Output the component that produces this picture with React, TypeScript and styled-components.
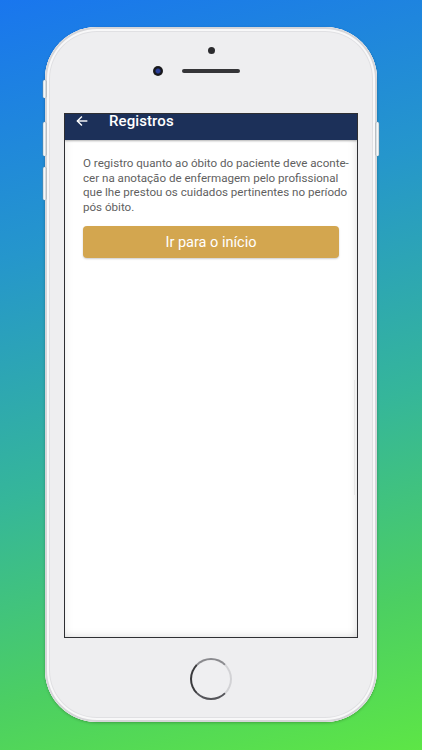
import React from "react";
import styled, { createGlobalStyle } from "styled-components";

const Global = createGlobalStyle`
  html, body { margin: 0; padding: 0; }
  body { font-family: Roboto, "Noto Sans", sans-serif; }
`;

const Page = styled.div`
  width: 422px;
  height: 750px;
  background: linear-gradient(165deg, #1976ee 0%, #2596cc 30%, #35b69a 58%, #4ccf62 82%, #5de646 100%);
  display: flex;
  justify-content: center;
  padding-top: 27px;
  box-sizing: border-box;
  overflow: hidden;
`;

const Phone = styled.div`
  position: relative;
  width: 332px;
  height: 695px;
  box-sizing: border-box;
  border-radius: 52px;
  background: #eeeef0;
  box-shadow:
    inset 0 0 0 2px #d6d6d9,
    inset 0 0 0 4px #f8f8f9,
    inset 0 0 0 5px #e0e0e3,
    0 1px 3px rgba(0, 0, 0, 0.25);
  display: flex;
  flex-direction: column;
  align-items: center;
`;

const SideButton = styled.div<{ $top: number; $h: number; $right?: boolean }>`
  position: absolute;
  top: ${(p) => p.$top}px;
  height: ${(p) => p.$h}px;
  width: 3px;
  ${(p) => (p.$right ? "right: -2px;" : "left: -2px;")}
  background: linear-gradient(90deg, #cfd6da, #f4f8fa, #c8ced2);
  border-radius: 2px;
  box-shadow: 0 0 0 0.5px rgba(120, 140, 150, 0.6);
`;

const TopBezel = styled.div`
  height: 86px;
  width: 100%;
  display: flex;
  flex-direction: column;
  align-items: center;
  padding-top: 20px;
  box-sizing: border-box;
`;

const Dot = styled.div`
  width: 7px;
  height: 7px;
  border-radius: 50%;
  background: #2b2b2e;
`;

const EarRow = styled.div`
  margin-top: 12px;
  display: flex;
  align-items: center;
  gap: 19px;
`;

const Camera = styled.div`
  width: 10px;
  height: 10px;
  border-radius: 50%;
  background: radial-gradient(circle at 50% 50%, #2a3f9a 0 25%, #151518 45%, #2b2b2e 100%);
`;

const Speaker = styled.div`
  width: 58px;
  height: 4px;
  border-radius: 3px;
  background: #353538;
`;

const Spacer = styled.div`
  width: 10px;
`;

const Screen = styled.div`
  width: 294px;
  height: 525px;
  box-sizing: border-box;
  border: 1.5px solid #2e2f33;
  background: #ffffff;
  display: flex;
  flex-direction: column;
  position: relative;
  overflow: hidden;
`;

const Header = styled.div`
  height: 26px;
  background: #1c3059;
  display: flex;
  align-items: flex-start;
  padding: 0 0 0 10px;
  box-shadow: 0 1px 2px rgba(0, 0, 0, 0.3);
  z-index: 1;
`;

const BackIcon = styled.svg`
  width: 14px;
  height: 14px;
  margin-top: 0px;
`;

const Title = styled.span`
  margin-left: 20px;
  margin-top: -2px;
  color: #ffffff;
  font-size: 15px;
  line-height: 18px;
  font-weight: 500;
  letter-spacing: 0.1px;
`;

const Content = styled.div`
  flex: 1;
  padding: 16px 18px 0 18px;
  box-shadow: inset -8px 0 10px -8px rgba(0, 0, 0, 0.15), inset 8px 0 10px -8px rgba(0, 0, 0, 0.08),
    inset 0 -8px 10px -8px rgba(0, 0, 0, 0.15);
  position: relative;
`;

const Paragraph = styled.p`
  margin: 0;
  font-size: 11.6px;
  line-height: 14.6px;
  color: #5f5f5f;
  white-space: nowrap;
`;

const Button = styled.button`
  margin-top: 12px;
  width: 100%;
  height: 32px;
  border: none;
  border-radius: 4px;
  background: #d3a64f;
  color: #ffffff;
  font-family: Roboto, sans-serif;
  font-size: 14.5px;
  box-shadow: 0 1px 2px rgba(0, 0, 0, 0.2);
`;

const ScrollHint = styled.div`
  position: absolute;
  right: 2px;
  top: 240px;
  width: 1px;
  height: 115px;
  background: #e6e6e6;
`;

const BottomBezel = styled.div`
  flex: 1;
  width: 100%;
  display: flex;
  align-items: center;
  justify-content: center;
  padding-bottom: 2px;
  box-sizing: border-box;
`;

const HomeButton = styled.div`
  width: 42px;
  height: 42px;
  border-radius: 50%;
  box-sizing: border-box;
  border: 2px solid #d2d2d5;
  border-top-color: #8a8a8e;
  border-left-color: #3a3a3d;
  border-bottom-color: #55555a;
  background: #efeff1;
`;

export default function App() {
  return (
    <>
      <Global />
      <Page>
        <Phone>
          <SideButton $top={53} $h={18} />
          <SideButton $top={95} $h={34} />
          <SideButton $top={140} $h={33} />
          <SideButton $top={95} $h={34} $right />
          <TopBezel>
            <Dot />
            <EarRow>
              <Camera />
              <Speaker />
              <Spacer />
            </EarRow>
          </TopBezel>
          <Screen>
            <Header>
              <BackIcon viewBox="0 0 24 24" fill="none" stroke="#ffffff" strokeWidth={2.4} strokeLinecap="square">
                <path d="M20 12H5" />
                <path d="M11 5l-7 7 7 7" />
              </BackIcon>
              <Title>Registros</Title>
            </Header>
            <Content>
              <Paragraph>
                O registro quanto ao óbito do paciente deve aconte-
                <br />
                cer na anotação de enfermagem pelo profissional
                <br />
                que lhe prestou os cuidados pertinentes no período
                <br />
                pós óbito.
              </Paragraph>
              <Button>Ir para o início</Button>
              <ScrollHint />
            </Content>
          </Screen>
          <BottomBezel>
            <HomeButton />
          </BottomBezel>
        </Phone>
      </Page>
    </>
  );
}
